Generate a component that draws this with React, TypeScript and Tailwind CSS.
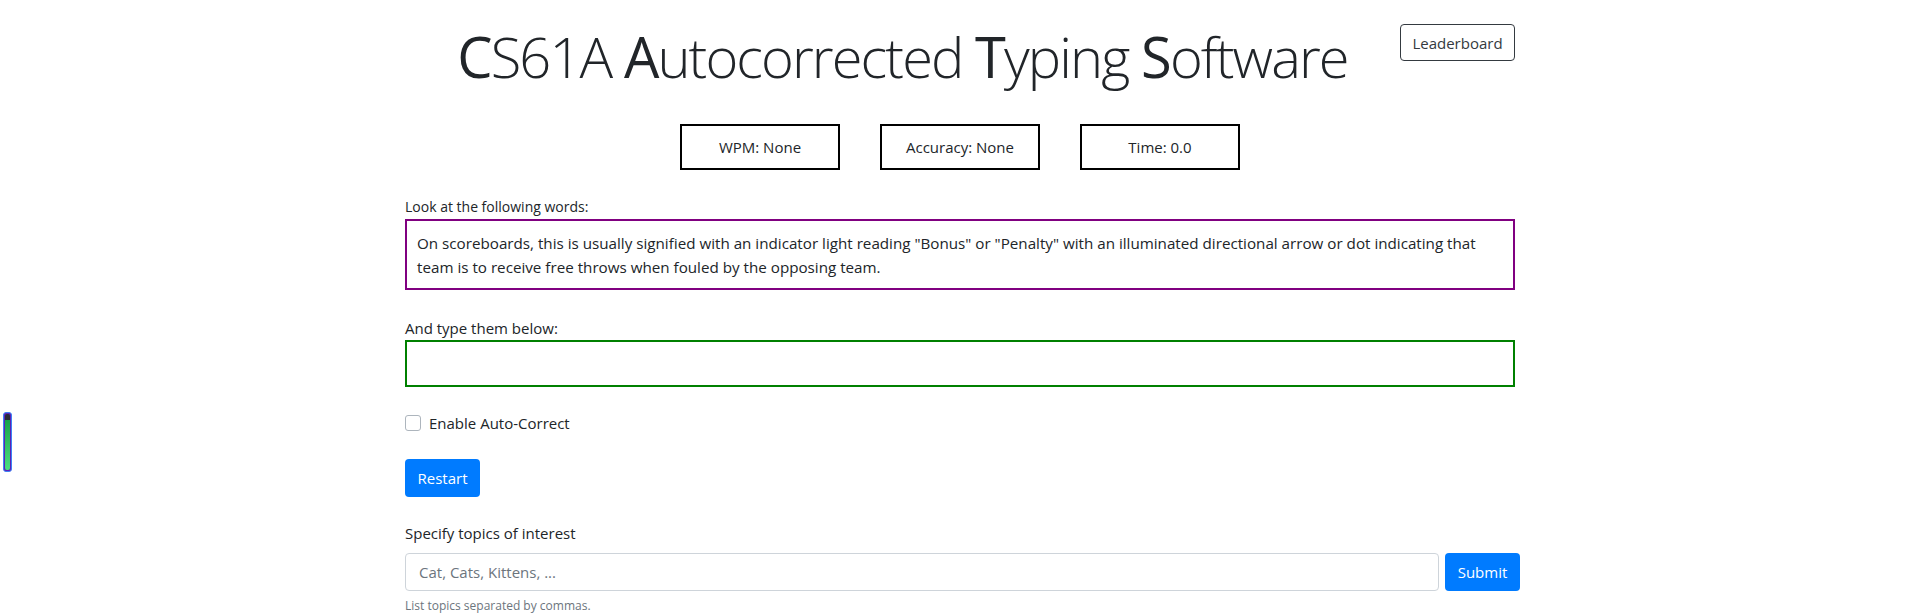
import React from "react";

const font = { fontFamily: '"Open Sans", "Noto Sans", sans-serif' };

function Title() {
  const words: [string, string][] = [
    ["C", "S61A"],
    ["A", "utocorrected"],
    ["T", "yping"],
    ["S", "oftware"],
  ];
  return (
    <h1 className="text-[56px] leading-[1.2] font-light text-[#212529] whitespace-nowrap tracking-[-1.9px]">
      {words.map(([a, b], i) => (
        <React.Fragment key={i}>
          {i > 0 ? " " : ""}
          <span className="font-normal">{a}</span>
          {b}
        </React.Fragment>
      ))}
    </h1>
  );
}

export default function App() {
  return (
    <div className="relative min-h-[615px] bg-white text-[#212529] text-[15px] leading-[24px]" style={font}>
      <div className="absolute left-[3px] top-[412px] w-[9px] h-[60px] rounded-[3px] border border-[#3b82f6] bg-[#5b21b6] p-[1px] flex flex-col">
        <div className="h-[6px] bg-[#2b2b38] rounded-t-[2px]" />
        <div className="flex-1 bg-gradient-to-b from-[#16a34a] to-[#4ade80] rounded-b-[2px]" />
      </div>

      <div className="mx-auto w-[1110px] pt-[24px]">
        <div className="flex items-start h-[70px]">
          <div className="flex-1 flex justify-center mt-[-1px]">
            <Title />
          </div>
          <button className="w-[115px] h-[37px] rounded-[4px] border border-[#343a40] text-[#343a40] text-[15px] bg-white">
            Leaderboard
          </button>
        </div>

        <div className="mt-[30px] flex justify-center gap-[40px]">
          {["WPM: None", "Accuracy: None", "Time: 0.0"].map((t) => (
            <div key={t} className="w-[160px] h-[46px] border-2 border-black flex items-center justify-center text-[15px]">
              {t}
            </div>
          ))}
        </div>

        <div className="mt-[25px] text-[14px]">Look at the following words:</div>
        <div className="border-2 border-[#800080] px-[10px] pt-[10px] pb-[9px] text-[15.2px] whitespace-nowrap">
          On scoreboards, this is usually signified with an indicator light reading "Bonus" or "Penalty" with an illuminated directional arrow or dot indicating that
          <br />
          team is to receive free throws when fouled by the opposing team.
        </div>

        <div className="mt-[26px]">And type them below:</div>
        <div className="border-2 border-[#008000] h-[47px]" />

        <label className="mt-[24px] flex items-center gap-[8px]">
          <span className="w-[16px] h-[16px] rounded-[3px] border border-[#adb5bd] bg-white" />
          Enable Auto-Correct
        </label>

        <button className="mt-[24px] w-[75px] h-[38px] rounded-[4px] bg-[#007bff] text-white text-[15px]">
          Restart
        </button>

        <div className="mt-[24px]">Specify topics of interest</div>
        <div className="mt-[8px] flex gap-[6px] mr-[-5px]">
          <div className="flex-1 h-[38px] rounded-[4px] border border-[#ced4da] px-[13px] flex items-center text-[#6c757d] text-[15px]">
            Cat, Cats, Kittens, ...
          </div>
          <button className="w-[75px] h-[38px] rounded-[4px] bg-[#007bff] text-white text-[15px]">
            Submit
          </button>
        </div>
        <div className="mt-[4px] text-[12px] leading-[21px] text-[#6c757d]">List topics separated by commas.</div>
      </div>
    </div>
  );
}
